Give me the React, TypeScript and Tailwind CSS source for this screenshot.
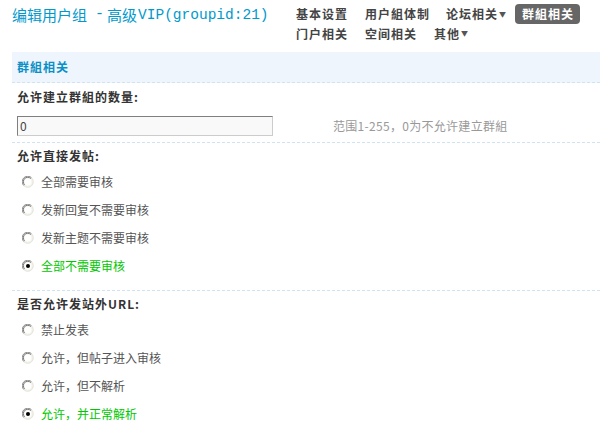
import React from "react";

const CJK = '"Noto Sans CJK SC", "Liberation Sans", sans-serif';
const MONO = '"Liberation Mono", "Noto Sans CJK SC", monospace';

function Radio({ checked }: { checked?: boolean }) {
  return (
    <svg width="12" height="12" viewBox="0 0 12 12" className="shrink-0">
      <circle cx="6" cy="6" r="5.5" fill="#f4f3ee" />
      <path d="M1.8 9.6 A5 5 0 0 1 9.6 1.8" fill="none" stroke="#8a8a8a" strokeWidth="1" />
      <path d="M9.6 1.8 A5 5 0 0 1 1.8 9.6" fill="none" stroke="#e4e2d8" strokeWidth="1" />
      <path d="M2.6 8.8 A4 4 0 0 1 8.8 2.6" fill="none" stroke="#5a5a5a" strokeWidth="0.8" />
      <circle cx="6" cy="6" r="3.4" fill="#ffffff" />
      {checked && <circle cx="6" cy="6" r="2" fill="#000000" />}
    </svg>
  );
}

function RadioRow({ label, checked }: { label: string; checked?: boolean }) {
  return (
    <div className="flex h-[28px] items-center pl-[10px]">
      <Radio checked={checked} />
      <span
        className={`ml-[7px] text-[12px] leading-none ${checked ? "text-[#00c800]" : "text-[#555555]"}`}
      >
        {label}
      </span>
    </div>
  );
}

function Label({ text, h }: { text: string; h: string }) {
  return (
    <div className={`flex ${h} items-center pl-[5px]`}>
      <span className="text-[12px] font-bold leading-none tracking-[1px] text-[#333333]">{text}</span>
    </div>
  );
}

function NavItem({ text, arrow }: { text: string; arrow?: boolean }) {
  return (
    <span className="flex items-center text-[12px] font-bold leading-none tracking-[1px] text-[#444444]">
      {text}
      {arrow && <span className="ml-[1px] text-[7px] text-[#555555]">▼</span>}
    </span>
  );
}

export default function App() {
  return (
    <div className="h-[423px] w-[600px] overflow-hidden bg-white" style={{ fontFamily: CJK }}>
      {/* header */}
      <div className="flex h-[52px]">
        <div className="w-[284px] shrink-0 pl-[12px] pt-[5px]">
          <div className="flex items-center whitespace-nowrap text-[15px] leading-[20px] text-[#0099cc]">
            <span className="shrink-0">编辑用户组</span>
            <span className="ml-[8px] mr-[3px] shrink-0" style={{ fontFamily: MONO }}>-</span>
            <span className="shrink-0">高级</span>
            <span className="ml-[1px] shrink-0 text-[14.5px]" style={{ fontFamily: MONO }}>
              VIP(groupid:21)
            </span>
          </div>
        </div>
        <div className="flex flex-col pl-[12px] pt-[4px]">
          <div className="flex h-[20px] items-center">
            <span className="w-[69px]"><NavItem text="基本设置" /></span>
            <span className="w-[81px]"><NavItem text="用户組体制" /></span>
            <span className="w-[69px]"><NavItem text="论坛相关" arrow /></span>
            <span className="flex h-[20px] items-center rounded-[4px] bg-[#666666] pl-[7px] pr-[6px] text-[12px] font-bold leading-none tracking-[1px] text-white">
              群組相关
            </span>
          </div>
          <div className="flex h-[19px] items-center">
            <span className="w-[69px]"><NavItem text="门户相关" /></span>
            <span className="w-[69px]"><NavItem text="空间相关" /></span>
            <span><NavItem text="其他" arrow /></span>
          </div>
        </div>
      </div>

      {/* main */}
      <div className="ml-[12px]">
        <div className="flex h-[31px] items-center border-b border-dashed border-[#cfe3f3] bg-[#eef5fc] pl-[5px]">
          <span className="text-[12px] font-bold leading-none tracking-[1px] text-[#0b90c6]">群組相关</span>
        </div>

        <Label text="允许建立群組的数量:" h="h-[28px]" />
        <div className="flex items-center border-b border-dashed border-[#cfe3f3] pb-[6px] pl-[5px] pt-[5px]">
          <div className="flex h-[20px] w-[256px] items-center border border-b-[#cccccc] border-l-[#7f7f7f] border-r-[#cccccc] border-t-[#7f7f7f] bg-[#f9f9f9] pl-[2px] text-[12px] text-[#444444]">
            0
          </div>
          <span className="ml-[60px] text-[12px] tracking-[0.3px] text-[#999999]">范围1-255，0为不允许建立群組</span>
        </div>

        <Label text="允许直接发帖:" h="h-[25px]" />
        <RadioRow label="全部需要审核" />
        <RadioRow label="发新回复不需要审核" />
        <RadioRow label="发新主题不需要审核" />
        <RadioRow label="全部不需要审核" checked />
        <div className="h-[11px] border-b border-dashed border-[#cfe3f3]" />

        <Label text="是否允许发站外URL:" h="h-[25px]" />
        <RadioRow label="禁止发表" />
        <RadioRow label="允许，但帖子进入审核" />
        <RadioRow label="允许，但不解析" />
        <RadioRow label="允许，并正常解析" checked />
      </div>
    </div>
  );
}
